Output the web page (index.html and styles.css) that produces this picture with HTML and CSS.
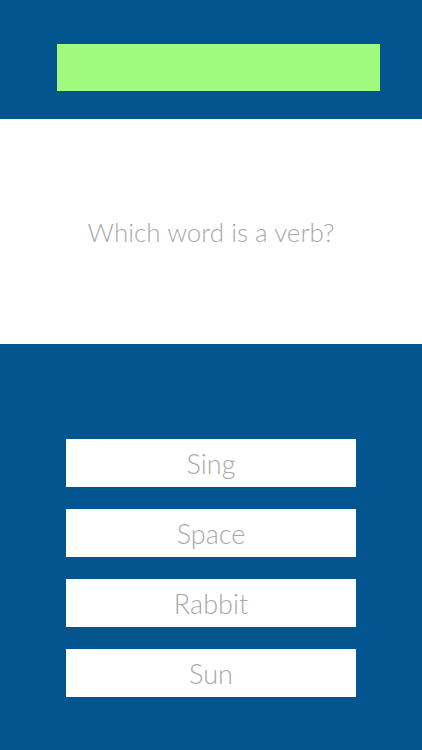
FILE: index.html
```html
<!DOCTYPE html>
<html lang="en">

<head>
    <meta charset="UTF-8">
    <meta name="viewport" content="width=device-width, initial-scale=1.0">
    <title>Quiz</title>
    <link rel="stylesheet" href="styles.css">
</head>

<body>
    <div class="top-bar">
        <div class="progress"></div>
    </div>

    <div class="question">
        <p>Which word is a verb?</p>
    </div>

    <div class="answers">
        <button class="answer">Sing</button>
        <button class="answer">Space</button>
        <button class="answer">Rabbit</button>
        <button class="answer">Sun</button>
    </div>
</body>

</html>
```

FILE: styles.css
```css
body {
    margin: 0;
    padding: 0;
    background-color: #02558f;
    font-family: Lato, "Open Sans", sans-serif;
    font-weight: 300;
    height: 750px;
    overflow: hidden;
}

.top-bar {
    padding: 44px 42px 28px 57px;
}

.progress {
    height: 47px;
    background-color: #a0fa7e;
}

.question {
    height: 225px;
    background-color: #fff;
    display: flex;
    justify-content: center;
    align-items: center;
}

.question p {
    margin: 0;
    color: #a9a9a9;
    font-size: 26px;
    padding-top: 0;
}

.answers {
    display: flex;
    flex-direction: column;
    align-items: center;
    gap: 22px;
    padding-top: 95px;
}

.answer {
    width: 290px;
    height: 48px;
    border: none;
    border-radius: 0;
    padding: 0;
    background-color: #fff;
    color: #a9a9a9;
    font-family: Lato, "Open Sans", sans-serif;
    font-weight: 300;
    font-size: 27px;
    cursor: pointer;
}
```
